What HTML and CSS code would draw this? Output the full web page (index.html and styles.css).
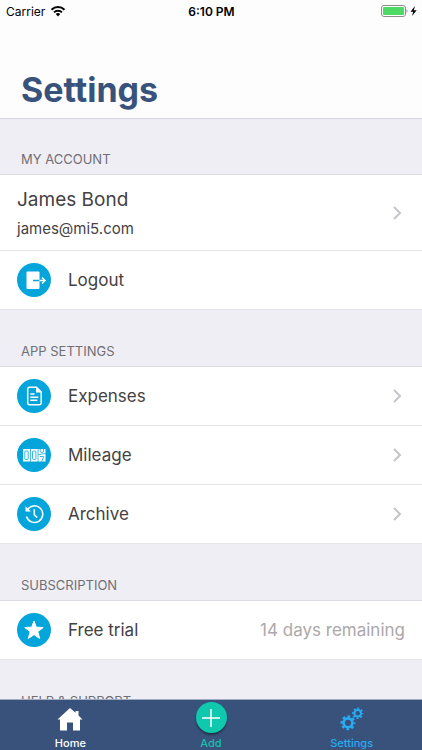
FILE: index.html
```html
<!DOCTYPE html>
<html lang="en">
<head>
    <meta charset="UTF-8">
    <meta name="viewport" content="width=device-width, initial-scale=1.0">
    <title>Settings</title>
    <link rel="stylesheet" href="styles.css">
</head>
<body>
    <div class="app">
        <header class="header">
            <div class="status-bar">
                <div class="status-left">
                    <span>Carrier</span>
                    <svg class="wifi" width="16" height="12" viewBox="0 0 16 12">
                        <path d="M1.5 4.7a9.3 9.3 0 0 1 13 0" fill="none" stroke="#000" stroke-width="2"/>
                        <path d="M4 7.4a5.7 5.7 0 0 1 8 0" fill="none" stroke="#000" stroke-width="2"/>
                        <path d="M8 11.4L5.7 9a3.3 3.3 0 0 1 4.6 0z"/>
                    </svg>
                </div>
                <span class="time">6:10 PM</span>
                <div class="status-right">
                    <svg width="36" height="12" viewBox="0 0 36 12">
                        <rect x=".5" y=".5" width="24" height="11" rx="2.5" fill="#fff" stroke="#8e8e8e"/>
                        <rect x="2" y="2" width="21" height="8" rx="1" fill="#4cd964"/>
                        <path d="M25.500 4v4c1.300-.5 1.300-3.500 0-4z" fill="#8e8e8e"/>
                        <path d="M34 1l-4.500 5.700h2.700L31 11l4.700-5.800h-2.900z"/>
                    </svg>
                </div>
            </div>
            <h1>Settings</h1>
        </header>

        <main class="content">
            <section>
                <h2>My account</h2>
                <a class="row account" href="#">
                    <span class="account-text">
                        <span class="name">James Bond</span>
                        <span class="email">james@mi5.com</span>
                    </span>
                    <svg class="chevron" viewBox="0 0 8 14"><path d="M1 1l6 6-6 6"/></svg>
                </a>
                <button class="row" type="button">
                    <svg class="icon" viewBox="0 0 34 34">
                        <circle cx="17" cy="17" r="17"/>
                        <rect class="fill" x="9.500" y="8.500" width="13" height="17.500" rx="1"/>
                        <path class="gap" d="M16 17.500h6.500"/>
                        <path class="line" d="M22.500 17.500h5.500M25 14.500l3 3-3 3"/>
                    </svg>
                    <span class="label">Logout</span>
                </button>
            </section>

            <section>
                <h2>App settings</h2>
                <a class="row" href="#">
                    <svg class="icon" viewBox="0 0 34 34">
                        <circle cx="17" cy="17" r="17"/>
                        <path class="line" d="M12.500 8.300h7l4.700 4.700v11a1.800 1.800 0 0 1-1.800 1.800h-9.900a1.800 1.800 0 0 1-1.800-1.800V10.100a1.800 1.800 0 0 1 1.800-1.800z"/>
                        <path class="fill" d="M19 8.500v5h5z"/>
                        <path class="line" d="M13.300 15h4.200M13.300 18.200h8M13.300 21.300h7"/>
                    </svg>
                    <span class="label">Expenses</span>
                    <svg class="chevron" viewBox="0 0 8 14"><path d="M1 1l6 6-6 6"/></svg>
                </a>
                <a class="row" href="#">
                    <svg class="icon" viewBox="0 0 34 34">
                        <circle cx="17" cy="17" r="17"/>
                        <path class="fill" d="M6 11h7v12.500H6zM13.700 11h7v12.500h-7zM21.400 11h7.100v12.500h-7.100z"/>
                        <g class="digits">
                            <rect x="7.800" y="13" width="3.400" height="8.500" rx="1"/>
                            <rect x="15.500" y="13" width="3.400" height="8.500" rx="1"/>
                            <path d="M23.200 11v2.200q0 1.200 1.700 1.200t1.700-1.200V11M21.400 16.500l7.100-1M23 18.500h3.600l-1.800 5"/>
                        </g>
                    </svg>
                    <span class="label">Mileage</span>
                    <svg class="chevron" viewBox="0 0 8 14"><path d="M1 1l6 6-6 6"/></svg>
                </a>
                <a class="row" href="#">
                    <svg class="icon" viewBox="0 0 34 34">
                        <circle cx="17" cy="17" r="17"/>
                        <path class="line" d="M10.300 13a8.300 8.300 0 1 1-.8 6.500M17.300 12.300v5.400l2.900 2.900"/>
                        <path class="fill" d="M8.500 9.300v5.200h5.400z"/>
                    </svg>
                    <span class="label">Archive</span>
                    <svg class="chevron" viewBox="0 0 8 14"><path d="M1 1l6 6-6 6"/></svg>
                </a>
            </section>

            <section>
                <h2>Subscription</h2>
                <button class="row" type="button">
                    <svg class="icon" viewBox="0 0 34 34">
                        <circle cx="17" cy="17" r="17"/>
                        <path class="fill star" d="M17 8l2.300 6.200 6.900.3-5.400 4.200 1.900 6.800-5.700-3.900-5.700 3.900 1.900-6.800-5.400-4.200 6.900-.3z"/>
                    </svg>
                    <span class="label">Free trial</span>
                    <span class="value">14 days remaining</span>
                </button>
            </section>

            <section>
                <h2>Help &amp; support</h2>
            </section>
        </main>

        <nav class="tab-bar">
            <a class="tab" href="#">
                <svg width="26" height="24" viewBox="0 0 26 24">
                    <path d="M13 1l5.500 4.800V4h3v4.500L25.500 12.500H23v11h-7v-8h-6v8H3v-11H.5z" fill="#fff"/>
                </svg>
                <span>Home</span>
            </a>
            <a class="tab add" href="#">
                <span class="add-circle">
                    <svg width="18" height="18" viewBox="0 0 18 18"><path d="M9 0v18M0 9h18" stroke="#fff" stroke-width="1.500"/></svg>
                </span>
                <span>Add</span>
            </a>
            <a class="tab active" href="#">
                <svg width="24" height="24" viewBox="0 0 24 24" fill="none" stroke="#27abf2">
                    <!-- teeth are drawn as dashes around each ring -->
                    <circle cx="8" cy="15.800" r="4.400" stroke-width="2.600"/>
                    <circle cx="8" cy="15.800" r="6.300" stroke-width="2.400" stroke-dasharray="2.600 2.348" stroke-dashoffset="1.300"/>
                    <circle cx="17.700" cy="6.300" r="3.300" stroke-width="2"/>
                    <circle cx="17.700" cy="6.300" r="4.800" stroke-width="1.800" stroke-dasharray="1.900 1.870" stroke-dashoffset=".95"/>
                </svg>
                <span>Settings</span>
            </a>
        </nav>
    </div>
</body>
</html>
```

FILE: styles.css
```css
* {
    box-sizing: border-box;
}

body {
    margin: 0;
    font-family: Inter, "Liberation Sans", sans-serif;
    color: #454142;
    background-color: #efeef4;
}

.app {
    display: flex;
    flex-direction: column;
    height: 100vh;
}

.header {
    position: relative;
    display: flex;
    flex-direction: column;
    background-color: #fdfdfd;
    box-shadow: 0 1px 0 #d5d4da;
}

.status-bar {
    display: grid;
    grid-template-columns: 1fr auto 1fr;
    align-items: center;
    height: 22px;
    padding: 0 5px 0 6px;
    font-size: 12px;
    color: #000;
}

.status-left {
    display: flex;
    align-items: center;
    gap: 5px;
}

.status-right {
    display: flex;
    justify-content: flex-end;
}

.time {
    font-weight: 600;
}

h1 {
    margin: 0;
    padding: 46px 21px 6px;
    font-size: 34px;
    line-height: 44px;
    font-weight: 700;
    color: #38527c;
}

.content {
    flex: 1;
    min-height: 0;
    overflow-y: auto;
    scrollbar-width: none;
}

h2 {
    margin: 0;
    padding: 32px 21px 6px;
    border-bottom: 1px solid #dcdbe1;
    font-size: 13px;
    line-height: 18px;
    font-weight: 400;
    text-transform: uppercase;
    color: #706f75;
}

.row {
    display: flex;
    align-items: center;
    gap: 17px;
    width: 100%;
    height: 59px;
    padding: 0 17px;
    border: 0;
    border-bottom: 1px solid #e4e4e6;
    background-color: #fff;
    font-family: inherit;
    font-size: 17px;
    color: inherit;
    text-align: left;
    text-decoration: none;
    cursor: pointer;
}

.account {
    height: 76px;
}

.account-text {
    display: flex;
    flex: 1;
    flex-direction: column;
    gap: 6px;
}

.name {
    font-size: 19px;
    line-height: 26px;
}

.email {
    font-size: 15px;
    line-height: 20px;
}

.label {
    flex: 1;
}

.value {
    color: #aba8a9;
}

.icon {
    width: 34px;
    height: 34px;
    flex-shrink: 0;
}

.icon circle {
    fill: #04a5da;
}

.icon .fill {
    fill: #fff;
}

.icon .line {
    fill: none;
    stroke: #fff;
    stroke-width: 1.5;
}

.icon .gap {
    stroke: #04a5da;
    stroke-width: 1.5;
}

.icon .star {
    stroke: #fff;
    stroke-linejoin: round;
}

.digits {
    fill: none;
    stroke: #04a5da;
    stroke-width: 0.8;
}

.chevron {
    width: 8px;
    height: 14px;
    margin-right: 4px;
    overflow: visible;
    fill: none;
    stroke: #c5c5c9;
    stroke-width: 2;
}

.tab-bar {
    display: flex;
    height: 51px;
    border-top: 1px solid #a3adc2;
    background-color: #38527c;
}

.tab {
    display: flex;
    flex: 1;
    flex-direction: column;
    align-items: center;
    justify-content: flex-end;
    gap: 5px;
    font-size: 11px;
    line-height: 14px;
    font-weight: 500;
    color: #fff;
    text-decoration: none;
}

.add {
    gap: 3px;
    color: #1abfae;
}

.add-circle {
    display: flex;
    align-items: center;
    justify-content: center;
    width: 31px;
    height: 31px;
    border-radius: 50%;
    background-color: #10c8ae;
    box-shadow: 0 2px 2px rgba(0, 0, 0, 0.4);
}

.active {
    color: #27abf2;
}
```
